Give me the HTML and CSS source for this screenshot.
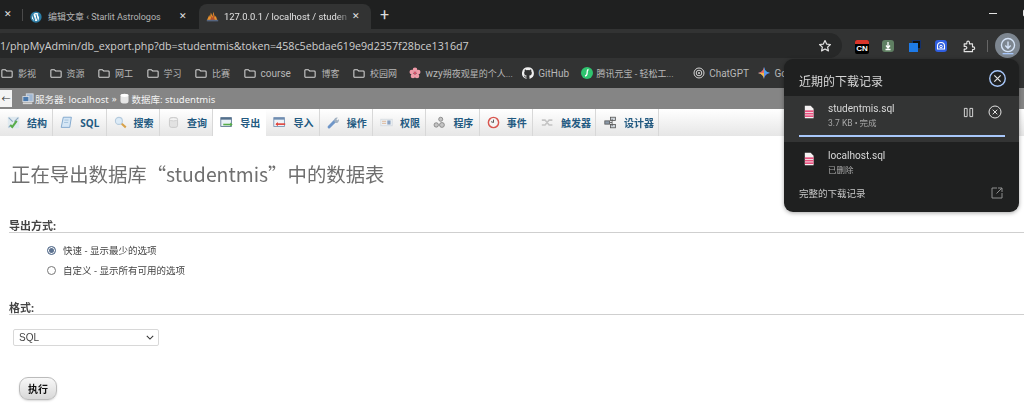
FILE: index.html
```html
<!DOCTYPE html>
<html lang="zh">
<head>
<meta charset="utf-8">
<title>phpMyAdmin</title>
<link rel="stylesheet" href="styles.css">
</head>
<body>
<div class="chrome-tabs">
  <span class="x first">✕</span>
  <span class="sep"></span>
  <div class="tab">
    <svg class="fav" viewBox="0 0 16 16"><circle cx="8" cy="8" r="6" fill="#fff"/><path d="M8 0.500a7.500 7.500 0 1 0 0 15a7.500 7.500 0 0 0 0-15zM2.200 8c0-.9.2-1.700.5-2.400l2.800 7.600A5.800 5.800 0 0 1 2.200 8zm5.800 5.800c-.6 0-1.100-.1-1.600-.2l1.700-5 1.800 4.800a5.700 5.700 0 0 1-1.900.4zm.8-8.500c.3 0 .7-.1.700-.1.300 0 .3-.4 0-.4 0 0-.9.100-1.400.1s-1.400-.1-1.400-.1c-.3 0-.3.400 0 .4 0 0 .4.100.6.100l.9 2.500-1.300 3.800-2.100-6.300c.3 0 .6-.1.600-.1.300 0 .3-.4 0-.4 0 0-.9.100-1.400.1h-.3A5.800 5.800 0 0 1 12 3.800c-.8 0-1.300.7-1.300 1.400 0 .6.400 1.100.7 1.700.3.500.6 1.100.6 2 0 .6-.2 1.300-.5 2.300l-.7 2.200z" fill="#2a7ea8"/></svg>
    <span class="tab-title">编辑文章 ‹ Starlit Astrologos</span>
    <span class="x">✕</span>
  </div>
  <div class="tab active">
    <svg class="fav" viewBox="0 0 16 16"><path d="M1 13L4 6l1 3 1-6 2 5 1-6 2 7 1-2 2 6z" fill="#e8912c"/><path d="M5 13l2-6 1 3 1-5 2 8z" fill="#b5502a"/><rect x="1" y="12" width="14" height="2" fill="#55657f"/></svg>
    <span class="tab-title fade">127.0.0.1 / localhost / studen</span>
    <span class="x">✕</span>
  </div>
  <span class="plus">+</span>
  <div class="win-ctrl"><span class="min"></span><span class="max"></span></div>
</div>

<div class="toolbar">
  <div class="omnibox">
    <span class="url">1/phpMyAdmin/db_export.php?db=studentmis&amp;token=458c5ebdae619e9d2357f28bce1316d7</span>
    <svg class="star" viewBox="0 0 16 16"><path d="M8 1.800l1.900 4 4.300.5-3.200 3 .9 4.300L8 11.500l-3.900 2.100.9-4.300-3.200-3 4.300-.5z" fill="none" stroke="#e3e3e3" stroke-width="1.400" stroke-linejoin="round"/></svg>
  </div>
  <div class="ext-cn"><span class="cn-flag"></span><span class="cn-text">CN</span></div>
  <div class="ext-dl"><svg viewBox="0 0 12 12"><path d="M6 2v5M4 5.500L6 8l2-2.500M3.500 9.500h5" stroke="#fff" stroke-width="1.300" fill="none"/></svg></div>
  <div class="ext-sq"><span class="sq-back"></span><span class="sq-front"></span></div>
  <div class="ext-blue"><svg viewBox="0 0 12 12"><path d="M2.500 9V6a3.500 3.500 0 0 1 7 0v3z" fill="none" stroke="#fff" stroke-width="1.100"/><circle cx="6" cy="6.500" r="1.300" fill="none" stroke="#fff"/></svg></div>
  <svg class="puzzle" viewBox="0 0 16 16"><path d="M2.500 5.500h3V4a1.500 1.500 0 0 1 3 0v1.500h3.500V9h1a1.500 1.500 0 0 1 0 3h-1v2.500H2.500v-3H4a1.500 1.500 0 0 0 0-3H2.500z" fill="none" stroke="#e3e3e3" stroke-width="1.300" stroke-linejoin="round"/></svg>
  <span class="tool-sep"></span>
  <div class="dl-btn"><svg viewBox="0 0 20 20"><circle cx="10" cy="9" r="7.300" fill="none" stroke="#d5e4f8" stroke-width="1.500"/><path d="M10 5v7M7 9.500l3 3 3-3" fill="none" stroke="#d5e4f8" stroke-width="1.500"/><path d="M4 18.500h12" stroke="#a8c7fa" stroke-width="1.500"/></svg></div>
</div>

<div class="bookmarks">
  <span class="bm"><svg class="folder" viewBox="0 0 14 12"><path d="M1 2.500a1 1 0 0 1 1-1h3l1.500 1.500H12a1 1 0 0 1 1 1v5.500a1 1 0 0 1-1 1H2a1 1 0 0 1-1-1z" fill="none" stroke="#d8d8d8" stroke-width="1.200"/></svg>影视</span>
  <span class="bm"><svg class="folder" viewBox="0 0 14 12"><path d="M1 2.500a1 1 0 0 1 1-1h3l1.500 1.500H12a1 1 0 0 1 1 1v5.500a1 1 0 0 1-1 1H2a1 1 0 0 1-1-1z" fill="none" stroke="#d8d8d8" stroke-width="1.200"/></svg>资源</span>
  <span class="bm"><svg class="folder" viewBox="0 0 14 12"><path d="M1 2.500a1 1 0 0 1 1-1h3l1.500 1.500H12a1 1 0 0 1 1 1v5.500a1 1 0 0 1-1 1H2a1 1 0 0 1-1-1z" fill="none" stroke="#d8d8d8" stroke-width="1.200"/></svg>网工</span>
  <span class="bm"><svg class="folder" viewBox="0 0 14 12"><path d="M1 2.500a1 1 0 0 1 1-1h3l1.500 1.500H12a1 1 0 0 1 1 1v5.500a1 1 0 0 1-1 1H2a1 1 0 0 1-1-1z" fill="none" stroke="#d8d8d8" stroke-width="1.200"/></svg>学习</span>
  <span class="bm"><svg class="folder" viewBox="0 0 14 12"><path d="M1 2.500a1 1 0 0 1 1-1h3l1.500 1.500H12a1 1 0 0 1 1 1v5.500a1 1 0 0 1-1 1H2a1 1 0 0 1-1-1z" fill="none" stroke="#d8d8d8" stroke-width="1.200"/></svg>比赛</span>
  <span class="bm"><svg class="folder" viewBox="0 0 14 12"><path d="M1 2.500a1 1 0 0 1 1-1h3l1.500 1.500H12a1 1 0 0 1 1 1v5.500a1 1 0 0 1-1 1H2a1 1 0 0 1-1-1z" fill="none" stroke="#d8d8d8" stroke-width="1.200"/></svg><span class="lat">course</span></span>
  <span class="bm"><svg class="folder" viewBox="0 0 14 12"><path d="M1 2.500a1 1 0 0 1 1-1h3l1.500 1.500H12a1 1 0 0 1 1 1v5.500a1 1 0 0 1-1 1H2a1 1 0 0 1-1-1z" fill="none" stroke="#d8d8d8" stroke-width="1.200"/></svg>博客</span>
  <span class="bm"><svg class="folder" viewBox="0 0 14 12"><path d="M1 2.500a1 1 0 0 1 1-1h3l1.500 1.500H12a1 1 0 0 1 1 1v5.500a1 1 0 0 1-1 1H2a1 1 0 0 1-1-1z" fill="none" stroke="#d8d8d8" stroke-width="1.200"/></svg>校园网</span>
  <span class="bm wzy"><svg class="favbm" viewBox="0 0 12 12"><g fill="#ef9aa8"><circle cx="6" cy="2.800" r="2.300"/><circle cx="9.200" cy="5" r="2.300"/><circle cx="8" cy="9" r="2.300"/><circle cx="4" cy="9" r="2.300"/><circle cx="2.800" cy="5" r="2.300"/></g><circle cx="6" cy="6" r="1.200" fill="#d9506a"/></svg><span class="lat">wzy</span>朔夜观星的个人...</span>
  <span class="bm hub"><svg class="favbm" viewBox="0 0 16 16"><path fill="#f0f0f0" d="M8 .2a8 8 0 0 0-2.500 15.600c.4.100.5-.2.500-.4v-1.400c-2.200.5-2.700-1-2.700-1-.4-.9-.9-1.200-.9-1.200-.7-.5.100-.5.100-.5.800.1 1.200.8 1.200.8.700 1.200 1.900.9 2.300.7.100-.5.300-.9.500-1.100-1.800-.2-3.600-.9-3.600-4 0-.9.300-1.600.8-2.100-.1-.2-.4-1 .1-2.100 0 0 .7-.2 2.200.8a7.600 7.600 0 0 1 4 0c1.500-1 2.200-.8 2.200-.8.400 1.100.2 1.900.1 2.100.5.600.8 1.300.8 2.100 0 3.100-1.900 3.700-3.700 3.900.3.300.6.800.6 1.500v2.200c0 .2.100.5.600.4A8 8 0 0 0 8 .2z"/></svg><span class="lat">GitHub</span></span>
  <span class="bm"><svg class="favbm" viewBox="0 0 12 12"><circle cx="6" cy="6" r="6" fill="#2fc46f"/><path d="M7.500 2.500C5.500 3 6.500 5 6 7c-.2 1-1 1.800-2 2" fill="none" stroke="#fff" stroke-width="1.300"/></svg>腾讯元宝 - 轻松工...</span>
  <span class="bm gpt"><svg class="favbm" viewBox="0 0 12 12"><g fill="none" stroke="#d5d5d5"><circle cx="6" cy="6" r="5"/><circle cx="6" cy="6" r="2.800"/></g><circle cx="6" cy="6" r="1" fill="#d5d5d5"/></svg><span class="lat">ChatGPT</span></span>
  <span class="bm gem"><svg class="favbm" viewBox="0 0 12 12"><path d="M6 0C6.500 3.500 8.500 5.500 12 6 8.500 6.500 6.500 8.500 6 12 5.500 8.500 3.500 6.500 0 6 3.500 5.500 5.500 3.500 6 0z" fill="#5b8def"/><path d="M6 0C6.500 3.500 8.500 5.500 12 6H6z" fill="#4aa5e8"/><path d="M0 6C3.500 5.500 5.500 3.500 6 0V6z" fill="#ec6a5e"/><path d="M0 6C3.500 6.500 5.500 8.500 6 12V6z" fill="#f5b942"/></svg><span class="lat">Go</span></span>
</div>

<div class="page">
  <div class="crumbs">
    <span class="back">←</span>
    <svg class="crumb-ic" viewBox="0 0 14 14"><rect x="5" y="1" width="8" height="9" fill="#9fb7d3" stroke="#d8dde3"/><rect x="1" y="4" width="7" height="6" fill="#4a79ad" stroke="#d8dde3"/><rect x="1" y="11" width="11" height="2" fill="#d8d8d8"/></svg>
    <span>服务器: localhost</span>
    <span class="crumb-sep">»</span>
    <svg class="crumb-db" viewBox="0 0 10 12"><rect x="0.500" y="1" width="9" height="10.500" rx="3" fill="#e6e6e6"/><ellipse cx="5" cy="2.500" rx="4.500" ry="1.800" fill="#fff"/></svg>
    <span>数据库: studentmis</span>
  </div>
  <nav class="tabs">
    <a class="pt"><svg class="ti" viewBox="0 0 16 16"><rect x="1" y="1" width="14" height="14" fill="#dfe9ef"/><path d="M2 2l5 5M14 2L9 7M2 14l3-3" stroke="#8aa6bf" stroke-width="1.300"/><path d="M4 11l2.500 2.500L12 6" stroke="#58ad4a" stroke-width="2.500" fill="none"/></svg>结构</a>
    <a class="pt"><svg class="ti" viewBox="0 0 16 16"><path d="M4 1.500h10l-2 12.500H1.500z" fill="#d5e6f5" stroke="#6f9bc6"/><path d="M5.500 5h5M5 8h5" stroke="#9dbcd9"/></svg>SQL</a>
    <a class="pt"><svg class="ti" viewBox="0 0 16 16"><circle cx="6" cy="6" r="4.300" fill="#dcebf7" stroke="#b4cadd" stroke-width="1.300"/><path d="M9.500 9.500l5 4.500" stroke="#d8a24a" stroke-width="2.500"/></svg>搜索</a>
    <a class="pt"><svg class="ti" viewBox="0 0 16 16"><rect x="3" y="2" width="10" height="12" rx="2.500" fill="#e2e2e2" stroke="#c4c4c4"/><ellipse cx="8" cy="4" rx="5" ry="2" fill="#f3f3f3" stroke="#cbcbcb"/></svg>查询</a>
    <a class="pt on"><svg class="ti" viewBox="0 0 16 16"><rect x="1" y="2" width="13" height="11" fill="#e9f1f7" stroke="#54708c"/><rect x="1" y="2" width="13" height="2.500" fill="#54708c"/><path d="M4 10.500h10" stroke="#56ad4a" stroke-width="2"/><path d="M12.500 8l3 2.500-3 2.500z" fill="#56ad4a"/></svg>导出</a>
    <a class="pt"><svg class="ti" viewBox="0 0 16 16"><rect x="1" y="2" width="13" height="11" fill="#eef3f8" stroke="#6f8db0"/><rect x="1" y="2" width="13" height="2.500" fill="#6f8db0"/><path d="M4 10h11" stroke="#e0443c" stroke-width="2"/><path d="M6 7.500L3 10l3 2.500z" fill="#e0443c"/></svg>导入</a>
    <a class="pt"><svg class="ti" viewBox="0 0 16 16"><path d="M2.500 13.500L10 6" stroke="#6f96c8" stroke-width="3.500" stroke-linecap="round"/><path d="M9 6.500a3.500 3.500 0 0 1 4.500-4.500l-2 2 1 1.500 2-1.500a3.500 3.500 0 0 1-4.500 4.500z" fill="#a3b2c2"/></svg>操作</a>
    <a class="pt"><svg class="ti" viewBox="0 0 16 16"><rect x="1" y="4" width="14" height="8" fill="#eef1f4" stroke="#d3d9df"/><rect x="9" y="5.500" width="4" height="5" fill="#8ba3c2"/><path d="M2.500 6.500h5M2.500 9h5" stroke="#d9aa85"/></svg>权限</a>
    <a class="pt"><svg class="ti" viewBox="0 0 16 16"><g fill="#c4c4c4" stroke="#7f7f7f"><circle cx="9.500" cy="4" r="2.500"/><circle cx="4" cy="11" r="2.700"/><circle cx="11" cy="11" r="3"/></g></svg>程序</a>
    <a class="pt"><svg class="ti" viewBox="0 0 16 16"><circle cx="8" cy="8" r="6.300" fill="#f4f4f4" stroke="#d9564f" stroke-width="1.800"/><path d="M8 8V4.500M8 8l-3-1" stroke="#555" stroke-width="1.200"/></svg>事件</a>
    <a class="pt wide"><svg class="ti" viewBox="0 0 16 16"><path d="M1 5h4l5 6h4M1 11h4l5-6h4" fill="none" stroke="#c4c4c4" stroke-width="2"/></svg>触发器</a>
    <a class="pt wide"><svg class="ti" viewBox="0 0 16 16"><rect x="8" y="1.500" width="6" height="4" fill="#d0d6dc" stroke="#555"/><rect x="8" y="10.500" width="6" height="4" fill="#d0d6dc" stroke="#555"/><rect x="1" y="6" width="6" height="4" fill="#8b99a8" stroke="#555"/><path d="M7 8h3V3.500M10 8v4.500" stroke="#555" fill="none"/></svg>设计器</a>
  </nav>
  <h2 class="heading">正在导出数据库“studentmis”中的数据表</h2>
  <h3 class="sec sec-method">导出方式:</h3>
  <ul class="opts">
    <li><span class="radio checked"></span>快速 - 显示最少的选项</li>
    <li><span class="radio"></span>自定义 - 显示所有可用的选项</li>
  </ul>
  <h3 class="sec sec-format">格式:</h3>
  <div class="selectbox"><span>SQL</span><svg viewBox="0 0 10 6"><path d="M1 1l4 4 4-4" fill="none" stroke="#333" stroke-width="1.300"/></svg></div>
  <button class="go">执行</button>
</div>

<aside class="dl-pop">
  <div class="dl-head">
    <span>近期的下载记录</span>
    <span class="dl-close"><svg viewBox="0 0 16 16"><circle cx="8" cy="8" r="7.300" fill="none" stroke="#a8c7fa" stroke-width="1.300"/><path d="M5 5l6 6M11 5l-6 6" stroke="#e3e3e3" stroke-width="1.100"/></svg></span>
  </div>
  <div class="dl-item cur">
    <svg class="file" viewBox="0 0 12 16"><path d="M1 0.500h7l3.500 3.500v11.500H1z" fill="#f5f1f2"/><rect x="1" y="6" width="10.500" height="2" fill="#e9517f"/><rect x="1" y="9" width="10.500" height="2" fill="#e9517f"/><rect x="1" y="12" width="10.500" height="2" fill="#e9517f"/></svg>
    <div class="dl-text"><div class="dl-name">studentmis.sql</div><div class="dl-sub">3.7 KB • 完成</div></div>
    <svg class="dl-pause" viewBox="0 0 12 12"><path d="M1.500 1.500h3v9h-3zM7.500 1.500h3v9h-3z" fill="none" stroke="#e3e3e3" stroke-width="1"/></svg>
    <svg class="dl-cancel" viewBox="0 0 14 14"><circle cx="7" cy="7" r="6" fill="none" stroke="#e3e3e3"/><path d="M4.700 4.700l4.600 4.600M9.300 4.700l-4.600 4.600" stroke="#e3e3e3"/></svg>
    <span class="bar"></span>
  </div>
  <div class="dl-item">
    <svg class="file" viewBox="0 0 12 16"><path d="M1 0.500h7l3.500 3.500v11.500H1z" fill="#f5f1f2"/><rect x="1" y="6" width="10.500" height="2" fill="#e9517f"/><rect x="1" y="9" width="10.500" height="2" fill="#e9517f"/><rect x="1" y="12" width="10.500" height="2" fill="#e9517f"/></svg>
    <div class="dl-text"><div class="dl-name">localhost.sql</div><div class="dl-sub">已删除</div></div>
  </div>
  <div class="dl-foot">
    <span>完整的下载记录</span>
    <svg viewBox="0 0 12 12"><path d="M6 1H1v10h10V6M7 1h4v4M11 1L5.500 6.500" fill="none" stroke="#8f8f8f" stroke-width="1"/></svg>
  </div>
</aside>
</body>
</html>
```
FILE: styles.css
```css
* { box-sizing: border-box; }
html, body { margin: 0; padding: 0; }
body {
  width: 1024px; height: 410px; overflow: hidden; position: relative;
  background: #fff; color: #444;
  font-family: "Noto Sans", "Noto Sans CJK SC", sans-serif;
  filter: blur(0.3px);
}
svg { display: block; flex: none; }

/* browser tab strip */
.chrome-tabs {
  height: 29px; background: #1f2020; display: flex; align-items: center;
  color: #dcdcdc; font-size: 11px; position: relative;
  font-family: Roboto, "Noto Sans CJK SC", sans-serif;
}
.x { font-size: 9px; color: #e3e3e3; line-height: 1; width: 10px; text-align: center; flex: none; }
.first { margin-left: 3px; }
.sep { width: 1px; height: 12px; background: #4a4a4a; margin: 0 0 0 9px; }
.tab { width: 176px; height: 25px; margin-top: 4px; display: flex; align-items: center; padding: 0 0 0 7px; flex: none; }
.tab .fav { width: 12px; height: 12px; margin-right: 6px; }
.tab-title { width: 130px; white-space: nowrap; color: #b5b5b5; flex: none; font-size: 9px; }
.active { background: #323333; width: 172px; height: 25px; border-radius: 8px 8px 0 0; padding-left: 7px; }
.active .fav { width: 13px; height: 13px; margin-right: 5px; }
.active .tab-title { width: 127px; color: #e3e3e3; font-size: 9.4px; -webkit-mask-image: linear-gradient(90deg, #000 88%, transparent); mask-image: linear-gradient(90deg, #000 88%, transparent); }
.plus { margin-left: 9px; color: #dcdcdc; font-size: 16px; line-height: 1; }
.win-ctrl { position: absolute; left: 989px; top: 13px; display: flex; gap: 26px; }
.min { display: block; width: 8px; height: 1px; background: #e3e3e3; }
.max { display: block; width: 8px; height: 8px; margin-top: -4px; border: 1px solid #e3e3e3; border-radius: 2px; }

/* toolbar */
.toolbar { height: 32px; background: #323333; display: flex; align-items: center; padding-top: 4px; padding-bottom: 3px; }
.omnibox {
  width: 852px; height: 25px; margin-left: -10px; padding-left: 10px; padding-right: 10px;
  background: #272828; border-radius: 13px; display: flex; align-items: center; justify-content: space-between; flex: none;
}
.url { font-size: 10.7px; color: #cfcfcf; white-space: nowrap; font-family: "Open Sans", "Noto Sans", sans-serif; }
.star { width: 14px; height: 14px; }
.ext-cn { width: 14px; height: 14px; margin-left: 13px; margin-top: 2px; background: #000; border-radius: 2px; overflow: hidden; flex: none; }
.cn-flag { display: block; height: 4px; background: #d9352a; }
.cn-text { display: block; color: #fff; font: 700 8px/10px "Liberation Sans", sans-serif; text-align: center; }
.ext-dl { width: 12px; height: 12px; margin-left: 13px; background: #5f7f62; border-radius: 3px; flex: none; }
.ext-sq { width: 12px; height: 12px; margin-left: 15px; position: relative; flex: none; }
.sq-back { position: absolute; right: 0; top: 0; width: 9px; height: 9px; background: #111; border: 1px solid #14306a; }
.sq-front { position: absolute; left: 0; bottom: 0; width: 9px; height: 9px; background: #1e7ae8; }
.ext-blue { width: 12px; height: 12px; margin-left: 14px; background: #2f5ee0; border-radius: 3px; flex: none; }
.puzzle { width: 14px; height: 14px; margin-left: 15px; }
.tool-sep { width: 1px; height: 12px; background: #666; margin-left: 11px; flex: none; }
.dl-btn { width: 25px; height: 25px; border-radius: 50%; background: #7d8690; margin-left: 7px; display: flex; align-items: center; justify-content: center; flex: none; }
.dl-btn svg { width: 18px; height: 18px; }

/* bookmarks */
.bookmarks {
  height: 27px; background: #323333; display: flex; align-items: center; padding-left: 1px; padding-bottom: 3px;
  color: #b8b8b8; font-size: 9px; white-space: nowrap; gap: 13.5px; overflow: hidden;
  font-family: Roboto, "Noto Sans CJK SC", sans-serif;
}
.bm { display: flex; align-items: center; }
.wzy { margin-left: -1px; margin-right: -4px; }
.hub { margin-right: -2px; }
.gpt { margin-left: 6px; }
.gem { margin-left: -4px; }
.lat { font-size: 10px; }
.folder { width: 12px; height: 11px; margin-right: 5px; }
.favbm { width: 12px; height: 12px; margin-right: 4px; }

/* phpMyAdmin */
.crumbs {
  height: 21px; background: #858585; display: flex; align-items: center; color: #f3f3f3; font-size: 9.5px;
}
.back { width: 12px; height: 17px; background: #f4f4f4; color: #333; font-size: 9px; line-height: 17px; text-align: center; margin-right: 10px; }
.crumb-ic { width: 12px; height: 12px; margin-right: 1px; }
.crumb-sep { margin: 0 3px; }
.crumb-db { width: 9px; height: 11px; margin-right: 3px; }
.tabs {
  height: 27px; display: flex; background: linear-gradient(#fff, #e6e6e6);
  font-size: 10px; font-weight: 700; color: #235a81;
}
.pt { display: flex; align-items: center; padding: 0 6px 0 7px; border-right: 1px solid #d8d8d8; gap: 7px; white-space: nowrap; height: 100%; width: 53.3px; }
.pt.wide { width: 63px; padding-left: 8px; }
.pt.on { background: #fff; border-right: 0; }
.ti { width: 13px; height: 13px; }
.heading { margin: 23px 0 0 11px; font-size: 19.4px; line-height: 30px; font-weight: 400; color: #6f6f6f; font-family: "Noto Sans CJK SC", sans-serif; }
.sec {
  margin: 0 0 0 9px; font-size: 11px; line-height: 13px; font-weight: 700; color: #444;
  border-bottom: 1px solid #cfcfcf; padding-bottom: 0;
}
.sec-method { margin-top: 30px; }
.sec-format { margin-top: 21px; }
.opts { list-style: none; margin: 7px 0 0 47px; padding: 0; font-size: 9.5px; color: #444; }
.opts li { display: flex; align-items: center; height: 20px; gap: 7px; }
.radio { width: 9px; height: 9px; border-radius: 50%; border: 1px solid #767676; background: #fff; flex: none; position: relative; }
.radio.checked { border-color: #5c7290; box-shadow: inset 0 0 0 1px #fff; background: #5c7290; }
.selectbox {
  width: 146px; height: 17px; margin: 14px 0 0 13px; border: 1px solid #d8d8d8; border-radius: 2px;
  display: flex; align-items: center; justify-content: space-between; padding: 0 4px 0 5px;
  font: 10px "Liberation Sans", sans-serif; color: #444;
}
.selectbox svg { width: 8px; height: 5px; }
.go {
  display: block; margin: 31px 0 0 19px; width: 38px; height: 23px; border: 1px solid #bbb; border-radius: 9px;
  background: linear-gradient(#f8f8f8, #d8d8d8); font-size: 10px; font-weight: 700; color: #111; padding: 0;
  font-family: "Noto Sans CJK SC", sans-serif; box-shadow: 0 1px 2px rgba(0,0,0,.15);
}

/* download popup */
.dl-pop {
  position: absolute; left: 784px; top: 59px; width: 235px; height: 153px; background: #1f2020;
  border-radius: 9px; box-shadow: 0 1px 4px rgba(0,0,0,.35); color: #e3e3e3; overflow: hidden;
}
.dl-head { height: 37px; display: flex; align-items: center; justify-content: space-between; padding: 6px 13px 0 15px; font-size: 12px; color: #d6d6d6; }
.dl-close { margin-top: -4px; }
.dl-close svg { width: 17px; height: 17px; }
.dl-item { display: flex; align-items: center; height: 40px; padding: 0 17px 0 20px; position: relative; font-family: Roboto, "Noto Sans CJK SC", sans-serif; }
.dl-item.cur { background: #333434; height: 46px; padding-bottom: 7px; }
.file { width: 10px; height: 14px; margin-right: 14px; margin-bottom: 7px; }
.dl-text { flex: 1; }
.dl-name { font-size: 10.1px; line-height: 14px; color: #d8d8d8; }
.dl-sub { font-size: 8.5px; line-height: 12px; color: #a8a8a8; margin-top: 1px; }
.dl-pause { width: 11px; height: 11px; margin-right: 14px; margin-bottom: 7px; }
.dl-cancel { width: 14px; height: 14px; margin-bottom: 7px; }
.bar { position: absolute; left: 15px; right: 14px; bottom: 5px; height: 2px; background: #a8c7fa; }
.dl-foot { display: flex; align-items: center; justify-content: space-between; padding: 0 16px 0 15px; height: 22px; font-size: 9.5px; color: #c8c8c8; }
.dl-foot svg { width: 12px; height: 12px; }
```
